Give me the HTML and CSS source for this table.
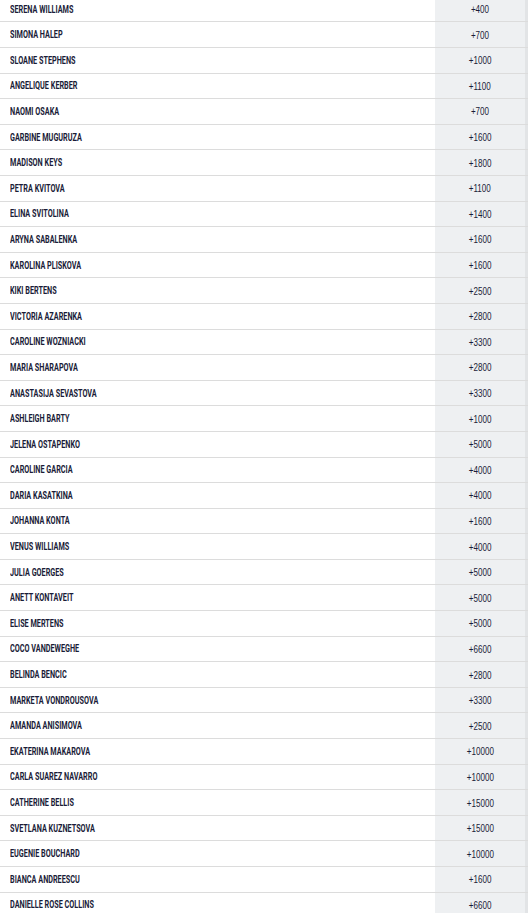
FILE: index.html
```html
<!DOCTYPE html>
<html>
<head>
<meta charset="utf-8">
<link rel="stylesheet" href="styles.css">
</head>
<body>
<div class="odds-table">
  <div class="row"><div class="name"><span>SERENA WILLIAMS</span></div><div class="odds"><span>+400</span></div></div>
  <div class="row"><div class="name"><span>SIMONA HALEP</span></div><div class="odds"><span>+700</span></div></div>
  <div class="row"><div class="name"><span>SLOANE STEPHENS</span></div><div class="odds"><span>+1000</span></div></div>
  <div class="row"><div class="name"><span>ANGELIQUE KERBER</span></div><div class="odds"><span>+1100</span></div></div>
  <div class="row"><div class="name"><span>NAOMI OSAKA</span></div><div class="odds"><span>+700</span></div></div>
  <div class="row"><div class="name"><span>GARBINE MUGURUZA</span></div><div class="odds"><span>+1600</span></div></div>
  <div class="row"><div class="name"><span>MADISON KEYS</span></div><div class="odds"><span>+1800</span></div></div>
  <div class="row"><div class="name"><span>PETRA KVITOVA</span></div><div class="odds"><span>+1100</span></div></div>
  <div class="row"><div class="name"><span>ELINA SVITOLINA</span></div><div class="odds"><span>+1400</span></div></div>
  <div class="row"><div class="name"><span>ARYNA SABALENKA</span></div><div class="odds"><span>+1600</span></div></div>
  <div class="row"><div class="name"><span>KAROLINA PLISKOVA</span></div><div class="odds"><span>+1600</span></div></div>
  <div class="row"><div class="name"><span>KIKI BERTENS</span></div><div class="odds"><span>+2500</span></div></div>
  <div class="row"><div class="name"><span>VICTORIA AZARENKA</span></div><div class="odds"><span>+2800</span></div></div>
  <div class="row"><div class="name"><span>CAROLINE WOZNIACKI</span></div><div class="odds"><span>+3300</span></div></div>
  <div class="row"><div class="name"><span>MARIA SHARAPOVA</span></div><div class="odds"><span>+2800</span></div></div>
  <div class="row"><div class="name"><span>ANASTASIJA SEVASTOVA</span></div><div class="odds"><span>+3300</span></div></div>
  <div class="row"><div class="name"><span>ASHLEIGH BARTY</span></div><div class="odds"><span>+1000</span></div></div>
  <div class="row"><div class="name"><span>JELENA OSTAPENKO</span></div><div class="odds"><span>+5000</span></div></div>
  <div class="row"><div class="name"><span>CAROLINE GARCIA</span></div><div class="odds"><span>+4000</span></div></div>
  <div class="row"><div class="name"><span>DARIA KASATKINA</span></div><div class="odds"><span>+4000</span></div></div>
  <div class="row"><div class="name"><span>JOHANNA KONTA</span></div><div class="odds"><span>+1600</span></div></div>
  <div class="row"><div class="name"><span>VENUS WILLIAMS</span></div><div class="odds"><span>+4000</span></div></div>
  <div class="row"><div class="name"><span>JULIA GOERGES</span></div><div class="odds"><span>+5000</span></div></div>
  <div class="row"><div class="name"><span>ANETT KONTAVEIT</span></div><div class="odds"><span>+5000</span></div></div>
  <div class="row"><div class="name"><span>ELISE MERTENS</span></div><div class="odds"><span>+5000</span></div></div>
  <div class="row"><div class="name"><span>COCO VANDEWEGHE</span></div><div class="odds"><span>+6600</span></div></div>
  <div class="row"><div class="name"><span>BELINDA BENCIC</span></div><div class="odds"><span>+2800</span></div></div>
  <div class="row"><div class="name"><span>MARKETA VONDROUSOVA</span></div><div class="odds"><span>+3300</span></div></div>
  <div class="row"><div class="name"><span>AMANDA ANISIMOVA</span></div><div class="odds"><span>+2500</span></div></div>
  <div class="row"><div class="name"><span>EKATERINA MAKAROVA</span></div><div class="odds"><span>+10000</span></div></div>
  <div class="row"><div class="name"><span>CARLA SUAREZ NAVARRO</span></div><div class="odds"><span>+10000</span></div></div>
  <div class="row"><div class="name"><span>CATHERINE BELLIS</span></div><div class="odds"><span>+15000</span></div></div>
  <div class="row"><div class="name"><span>SVETLANA KUZNETSOVA</span></div><div class="odds"><span>+15000</span></div></div>
  <div class="row"><div class="name"><span>EUGENIE BOUCHARD</span></div><div class="odds"><span>+10000</span></div></div>
  <div class="row"><div class="name"><span>BIANCA ANDREESCU</span></div><div class="odds"><span>+1600</span></div></div>
  <div class="row"><div class="name"><span>DANIELLE ROSE COLLINS</span></div><div class="odds"><span>+6600</span></div></div>
</div>
</body>
</html>
```
FILE: styles.css
```css
html, body {
  margin: 0;
  padding: 0;
  background: #ffffff;
  overflow: hidden;
}
.odds-table {
  margin-top: -3.2px;
  width: 528px;
}
.row {
  display: flex;
  height: 25.6px;
  box-sizing: border-box;
  border-bottom: 1px solid #dcdcdc;
}
.name {
  flex: 1;
  display: flex;
  align-items: center;
  padding-left: 10px;
  font-family: "Roboto", "Liberation Sans", sans-serif;
  font-size: 11px;
  font-weight: 700;
  color: #1a1c38;
}
.name span {
  display: inline-block;
  white-space: nowrap;
  transform: scaleX(0.66);
  transform-origin: left center;
}
.odds {
  width: 90px;
  background: #eef0f2;
  border-left: 1px solid #ffffff;
  border-right: 3px solid #e2e4e6;
  display: flex;
  align-items: center;
  justify-content: center;
  font-family: "Liberation Sans", sans-serif;
  font-size: 11.5px;
  color: #1a1c38;
}
.odds span {
  display: inline-block;
  white-space: nowrap;
  transform: scaleX(0.7);
  transform-origin: center center;
}
```
